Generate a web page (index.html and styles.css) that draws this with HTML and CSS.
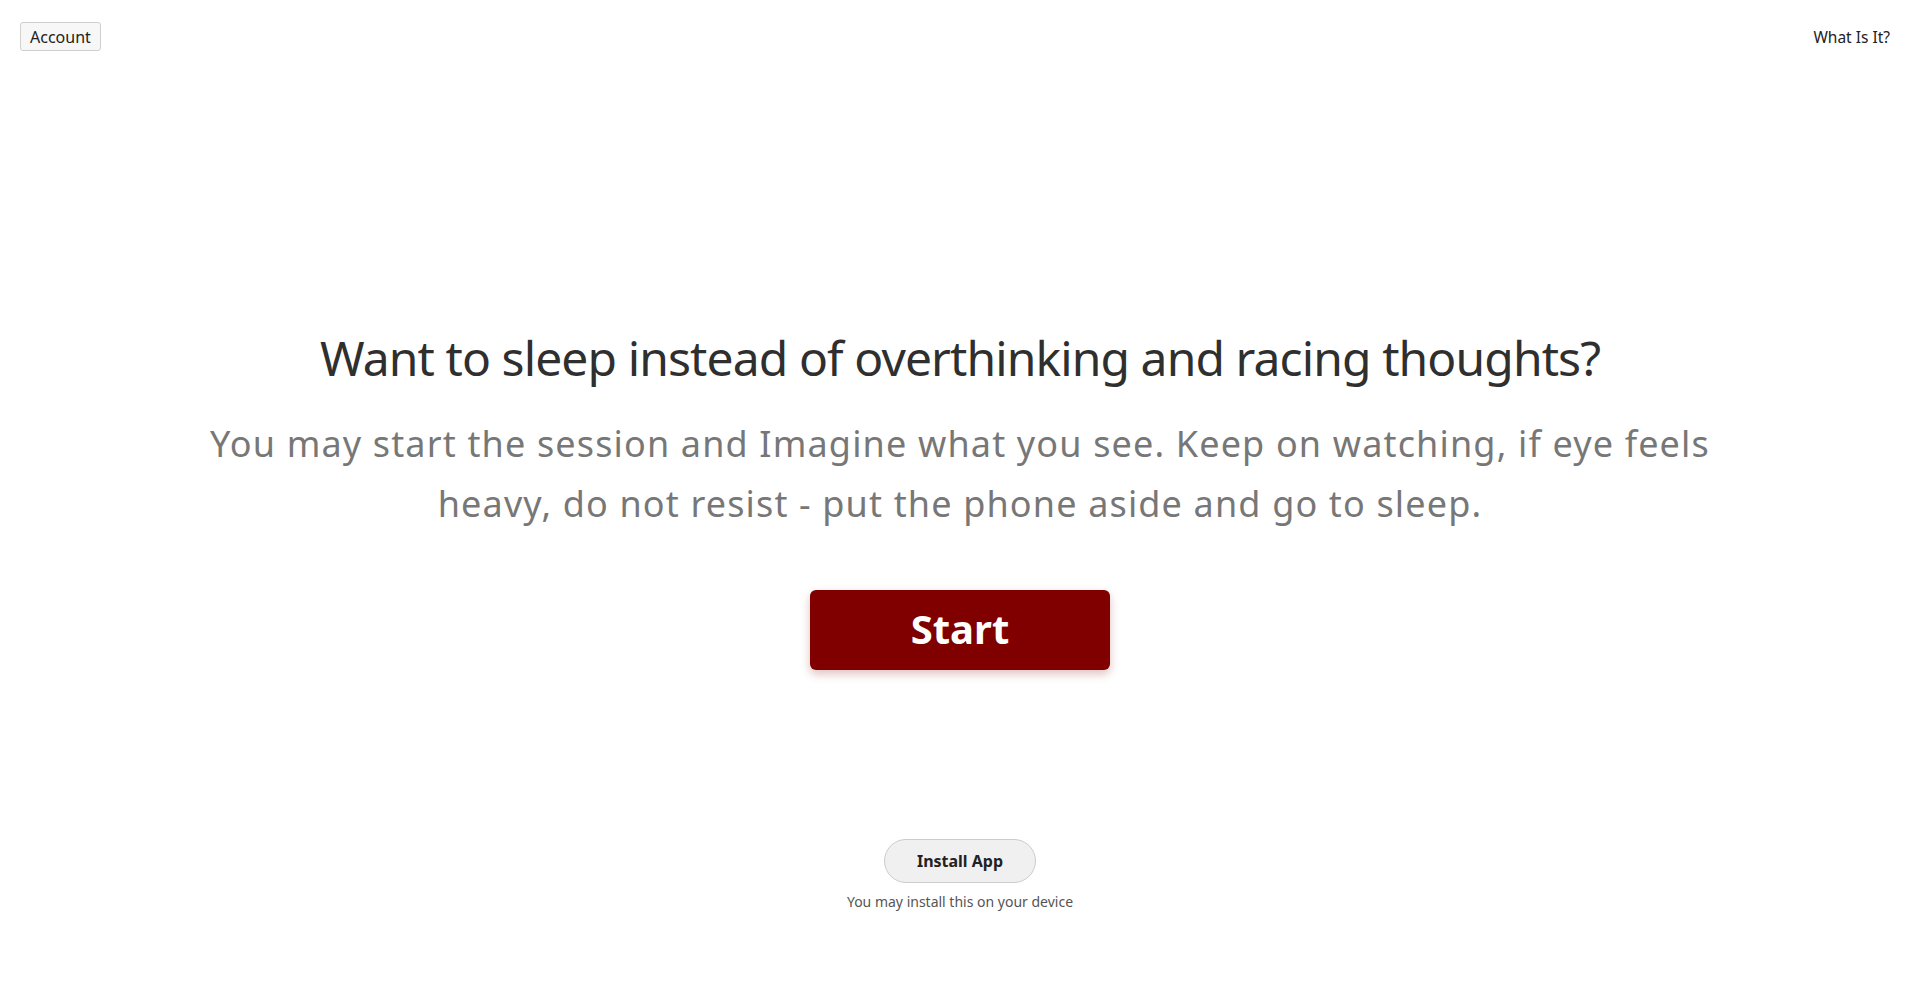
FILE: index.html
```html
<!DOCTYPE html>
<html lang="en">
<head>
<meta charset="utf-8">
<title>Sleep</title>
<link rel="stylesheet" href="styles.css">
</head>
<body>
<header class="topbar">
  <button class="account-btn">Account</button>
  <a class="what-link">What Is It?</a>
</header>
<main class="hero">
  <h1 class="title">Want to sleep instead of overthinking and racing thoughts?</h1>
  <p class="lead">You may start the session and Imagine what you see. Keep on watching, if eye feels heavy, do not resist - put the phone aside and go to sleep.</p>
  <button class="start-btn">Start</button>
</main>
<footer class="install">
  <button class="install-btn">Install App</button>
  <p class="install-note">You may install this on your device</p>
</footer>
</body>
</html>
```
FILE: styles.css
```css
html, body {
  margin: 0;
  padding: 0;
  background: #ffffff;
}
body {
  font-family: "Noto Sans", "Open Sans", sans-serif;
  color: #333;
  height: 993px;
  overflow: hidden;
}
.topbar {
  display: flex;
  justify-content: space-between;
  align-items: center;
  padding: 22px 30px 0 20px;
}
.account-btn {
  font-family: inherit;
  font-size: 16px;
  height: 29px;
  padding: 0 9px;
  background: #f7f7f7;
  border: 1px solid #cfcfcf;
  border-radius: 3px;
  color: #222;
}
.what-link {
  font-size: 15.5px;
  color: #222;
}
.hero {
  display: flex;
  flex-direction: column;
  align-items: center;
  padding-top: 278px;
}
.title {
  margin: 0;
  font-size: 48px;
  line-height: 58px;
  font-weight: 400;
  letter-spacing: -0.9px;
  color: #2f2f2f;
}
.lead {
  margin: 27px 0 0;
  width: 1560px;
  text-align: center;
  font-size: 36px;
  line-height: 60px;
  letter-spacing: 1.15px;
  color: #777;
}
.start-btn {
  margin-top: 56px;
  width: 300px;
  height: 80px;
  background: #800000;
  color: #fff;
  border: none;
  border-radius: 6px;
  font-family: inherit;
  font-size: 40px;
  font-weight: 700;
  line-height: 1;
  padding: 0 0 3px;
  box-shadow: 0 4px 10px rgba(128, 0, 0, 0.25);
}
.install {
  display: flex;
  flex-direction: column;
  align-items: center;
  margin-top: 169px;
}
.install-btn {
  height: 44px;
  padding: 0 32px;
  border-radius: 22px;
  background: #f0f0f0;
  border: 1px solid #cccccc;
  font-family: inherit;
  font-size: 16px;
  font-weight: 700;
  color: #222;
}
.install-note {
  margin: 9px 0 0;
  font-size: 14px;
  color: #555;
}
```
